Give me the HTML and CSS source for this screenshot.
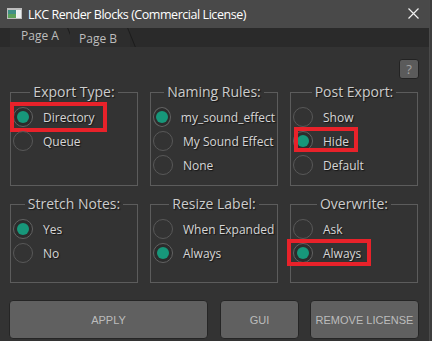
FILE: index.html
```html
<!DOCTYPE html>
<html lang="en">
<head>
  <meta charset="UTF-8" />
  <title>LKC Render Blocks (Commercial License)</title>
  <link rel="stylesheet" href="styles.css">
</head>
<body>
  <div class="window">
    <div class="titlebar">
      <svg class="app-icon" width="15" height="11" viewBox="0 0 15 11">
        <rect x="0" y="0" width="15" height="11" fill="#bdbdbd"/>
        <rect x="1" y="2" width="13" height="8" fill="#f2f2f2"/>
        <rect x="1" y="2" width="8" height="8" fill="#3f8f86"/>
        <rect x="1" y="6" width="8" height="4" fill="#5aa05a"/>
        <rect x="10" y="2" width="4" height="8" fill="#e9eef0"/>
      </svg>
      <span class="title">LKC Render Blocks (Commercial License)</span>
      <svg class="close" width="11" height="11" viewBox="0 0 11 11">
        <path d="M0.5 0.5 L10.5 10.5 M10.5 0.5 L0.5 10.5" stroke="#f0f0f0" stroke-width="1.2"/>
      </svg>
    </div>

    <div class="tabs">
      <div class="tab active">Page A</div>
      <div class="tab">Page B</div>
    </div>

    <div class="page">
      <div class="help-row">
        <button class="help">?</button>
      </div>

      <div class="groups">
        <fieldset class="group">
          <legend>Export Type:</legend>
          <div class="opt mark mark-dir"><span class="radio on"></span>Directory</div>
          <div class="opt"><span class="radio"></span>Queue</div>
        </fieldset>
        <fieldset class="group">
          <legend>Naming Rules:</legend>
          <div class="opt"><span class="radio on"></span>my_sound_effect</div>
          <div class="opt"><span class="radio"></span>My Sound Effect</div>
          <div class="opt"><span class="radio"></span>None</div>
        </fieldset>
        <fieldset class="group">
          <legend>Post Export:</legend>
          <div class="opt"><span class="radio"></span>Show</div>
          <div class="opt mark mark-hide"><span class="radio on"></span>Hide</div>
          <div class="opt"><span class="radio"></span>Default</div>
        </fieldset>

        <fieldset class="group">
          <legend>Stretch Notes:</legend>
          <div class="opt"><span class="radio on"></span>Yes</div>
          <div class="opt"><span class="radio"></span>No</div>
        </fieldset>
        <fieldset class="group">
          <legend>Resize Label:</legend>
          <div class="opt"><span class="radio"></span>When Expanded</div>
          <div class="opt"><span class="radio on"></span>Always</div>
        </fieldset>
        <fieldset class="group">
          <legend>Overwrite:</legend>
          <div class="opt"><span class="radio"></span>Ask</div>
          <div class="opt mark mark-always"><span class="radio on"></span>Always</div>
        </fieldset>
      </div>

      <div class="actions">
        <button class="btn btn-apply">APPLY</button>
        <button class="btn btn-gui">GUI</button>
        <button class="btn btn-remove">REMOVE LICENSE</button>
      </div>
    </div>
  </div>
  <div class="edge"></div>
</body>
</html>
```

FILE: styles.css
```css
body {
  margin: 0;
  display: flex;
  height: 341px;
  overflow: hidden;
  background-color: #333333;
  font-family: 'Open Sans', 'Noto Sans', sans-serif;
  color: #d2d2d2;
}
.window {
  width: 429px;
  display: flex;
  flex-direction: column;
}
.edge {
  width: 3px;
  background-color: #3d3d3d;
  border-left: 1px solid #4a4a4a;
}
.titlebar {
  height: 28px;
  background-color: #494949;
  display: flex;
  align-items: center;
  padding-left: 7px;
  padding-right: 10px;
}
.app-icon {
  margin-top: -1px;
}
.title {
  margin-left: 6px;
  font-size: 12.5px;
  color: #ffffff;
  flex: 1;
  letter-spacing: -0.45px;
}
.close {
  margin-top: -1px;
}
.tabs {
  height: 19px;
  background-color: #2a2a2a;
  display: flex;
  padding-left: 10px;
}
.tab {
  position: relative;
  width: 60px;
  font-size: 12px;
  line-height: 19px;
  color: #bdbdbd;
  padding-left: 11px;
  box-sizing: border-box;
}
.tab::after {
  content: '';
  position: absolute;
  top: 0;
  right: -2px;
  width: 1px;
  height: 19px;
  background-color: #1c1c1c;
  transform: skewX(22deg);
}
.tab.active {
  background-color: #2f2f2f;
  line-height: 16px;
}
.tab + .tab {
  background-color: #2d2d2d;
  padding-left: 9px;
  line-height: 21px;
}
.page {
  flex: 1;
  background-color: #333333;
  padding: 0 10px 0 10px;
}
.help-row {
  display: flex;
  justify-content: flex-end;
  padding-top: 12px;
}
.help {
  width: 20px;
  height: 20px;
  padding: 0;
  border: 1px solid #232323;
  border-radius: 3px;
  background-color: #5b5b5b;
  color: #a3a3a3;
  font-family: 'Open Sans', sans-serif;
  font-size: 13px;
  line-height: 18px;
}
.groups {
  margin-top: 5px;
  display: grid;
  grid-template-columns: 128px 128px 128px;
  grid-template-rows: 102px 87px;
  column-gap: 12px;
  row-gap: 10px;
}
.group {
  margin: 0;
  min-width: 0;
  border: 1px solid #5c5c5c;
  padding: 5px 2px 0 2px;
}
.group legend {
  margin: 0 auto;
  padding: 0 3px;
  font-size: 14px;
  line-height: 16px;
  color: #cccccc;
  text-shadow: 1px 1px 1px #151515;
}
.opt {
  position: relative;
  display: flex;
  align-items: center;
  height: 24px;
  font-size: 12px;
  color: #d6d6d6;
  text-shadow: 1px 1px 1px #151515;
}
.radio {
  width: 20px;
  height: 20px;
  box-sizing: border-box;
  border: 1px solid #585858;
  border-radius: 50%;
  margin-right: 10px;
  display: flex;
  align-items: center;
  justify-content: center;
}
.radio.on {
  border-color: #626262;
  background-color: #2c2c2c;
}
.radio.on::after {
  content: '';
  width: 12px;
  height: 12px;
  border-radius: 50%;
  background-color: #17977a;
}
.mark::after {
  content: '';
  position: absolute;
  box-sizing: border-box;
  border: 4px solid #e8222a;
}
.mark-dir::after {
  left: -3px;
  top: -3px;
  width: 97px;
  height: 30px;
}
.mark-hide::after {
  left: 1px;
  top: -2px;
  width: 64px;
  height: 25px;
}
.mark-always::after {
  left: -6px;
  top: -2px;
  width: 84px;
  height: 27px;
}
.actions {
  display: flex;
  margin-top: 17px;
  margin-left: -1px;
}
.btn {
  height: 39px;
  border: 1px solid #252525;
  border-radius: 4px;
  background-color: #606060;
  color: #bcbcbc;
  font-family: 'Liberation Sans', Arial, sans-serif;
  font-size: 11px;
  padding: 0;
}
.btn-apply {
  width: 199px;
}
.btn-gui {
  width: 79px;
  margin-left: 12px;
}
.btn-remove {
  width: 109px;
  margin-left: 11px;
}
```
